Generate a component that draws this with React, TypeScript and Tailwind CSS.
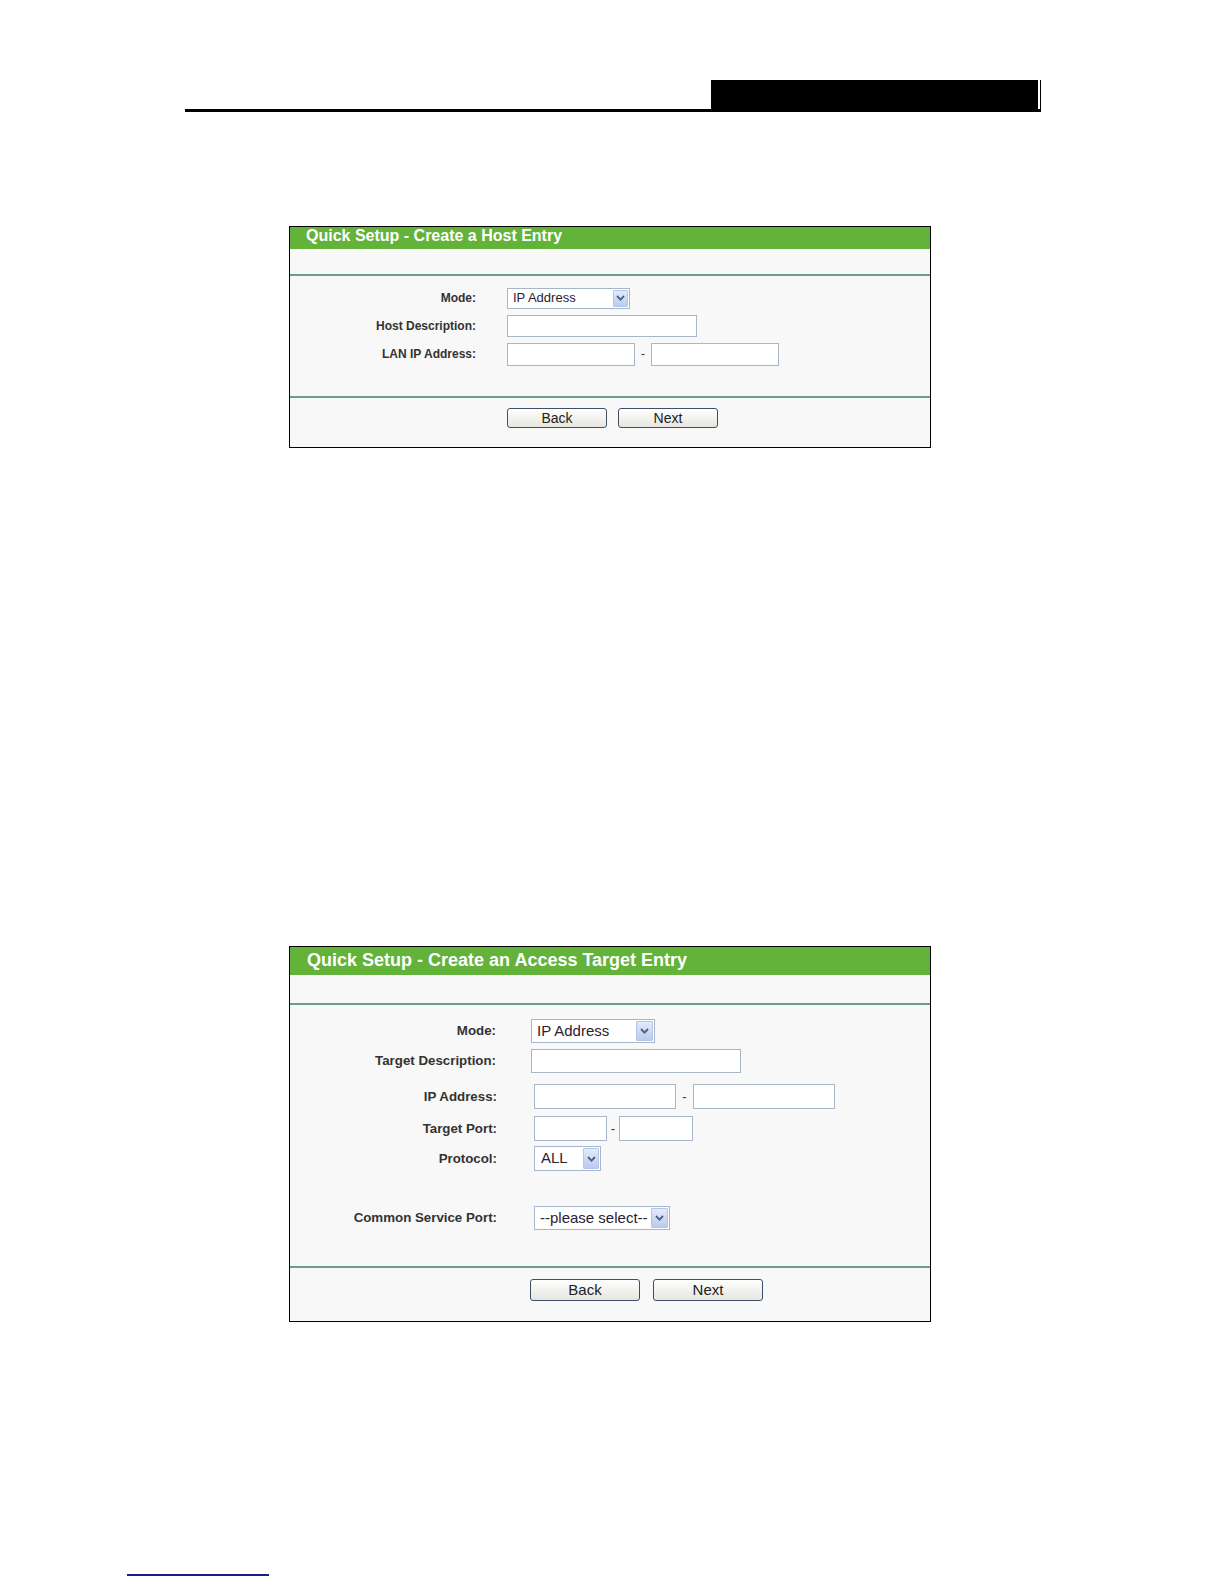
import React from "react";

const Chevron = () => (
  <svg width="9" height="6" viewBox="0 0 9 6">
    <path d="M1 1 L4.5 4.6 L8 1" fill="none" stroke="#4b5f8c" strokeWidth="1.8" />
  </svg>
);

function SelectBox({
  className,
  textClass,
  arrowClass,
  text,
}: {
  className: string;
  textClass: string;
  arrowClass: string;
  text: string;
}) {
  return (
    <div className={`flex items-stretch border border-[#a7b6c9] bg-white ${className}`}>
      <div className={`flex flex-1 items-center text-[#2b2133] ${textClass}`}>{text}</div>
      <div
        className={`m-px flex items-center justify-center rounded-[1px] border border-[#b3c4e6] bg-linear-to-b from-[#e3ebfb] to-[#b9cbef] ${arrowClass}`}
      >
        <Chevron />
      </div>
    </div>
  );
}

function Input({ className }: { className: string }) {
  return <div className={`border border-[#a7b6c9] bg-white ${className}`} />;
}

function Btn({ className, label }: { className: string; label: string }) {
  return (
    <div
      className={`flex items-center justify-center rounded-[3px] border border-[#3e5068] bg-linear-to-b from-[#ffffff] to-[#e6e5df] text-[#222] ${className}`}
    >
      {label}
    </div>
  );
}

export default function App() {
  return (
    <div className="relative min-h-[1584px] w-[1224px] bg-white font-['Liberation_Sans',Arial,sans-serif]">
      {/* page header */}
      <div className="ml-[185px] w-[856px] pt-[80px]">
        <div className="flex h-[29px] justify-end">
          <div className="w-[327px] bg-black" />
          <div className="w-[2px] bg-white" />
          <div className="w-[1px] bg-black" />
        </div>
        <div className="h-[3px] bg-black" />
      </div>

      {/* box 1 */}
      <div className="ml-[289px] mt-[114px] w-[642px] border border-black bg-[#f8f8f8]">
        <div className="h-[22px] bg-[#63b23a] pl-[16px] text-[16px] font-bold leading-[17px] text-white">
          Quick Setup - Create a Host Entry
        </div>
        <div className="h-[25px]" />
        <div className="h-[2px] bg-[#66a088]" />
        <div className="pb-[28px] pt-[8px] text-[12px]">
          <div className="flex h-[28px] items-center">
            <div className="w-[186px] text-right font-bold text-[#333]">Mode:</div>
            <div className="pl-[31px]">
              <SelectBox
                className="h-[21px] w-[123px]"
                textClass="pl-[5px] text-[13px]"
                arrowClass="w-[15px]"
                text="IP Address"
              />
            </div>
          </div>
          <div className="flex h-[28px] items-center">
            <div className="w-[186px] text-right font-bold text-[#333]">Host Description:</div>
            <div className="pl-[31px]">
              <Input className="h-[22px] w-[190px]" />
            </div>
          </div>
          <div className="flex h-[28px] items-center">
            <div className="w-[186px] text-right font-bold text-[#333]">LAN IP Address:</div>
            <div className="flex items-center pl-[31px]">
              <Input className="h-[23px] w-[128px]" />
              <div className="w-[16px] text-center text-[12px] text-[#333]">-</div>
              <Input className="h-[23px] w-[128px]" />
            </div>
          </div>
        </div>
        <div className="h-[2px] bg-[#66a088]" />
        <div className="flex h-[49px] gap-[11px] pl-[217px] pt-[10px]">
          <Btn className="h-[20px] w-[100px] text-[14px]" label="Back" />
          <Btn className="h-[20px] w-[100px] text-[14px]" label="Next" />
        </div>
      </div>

      {/* box 2 */}
      <div className="ml-[289px] mt-[498px] w-[642px] border border-black bg-[#f8f8f8]">
        <div className="h-[28px] bg-[#63b23a] pl-[17px] text-[18px] font-bold leading-[27px] text-white">
          Quick Setup - Create an Access Target Entry
        </div>
        <div className="h-[28px]" />
        <div className="h-[2px] bg-[#66a088]" />
        <div className="pb-[36px] text-[13.3px]">
          <div className="mt-[14px] flex h-[24px] items-center">
            <div className="w-[206px] text-right font-bold text-[#333]">Mode:</div>
            <div className="pl-[35px]">
              <SelectBox
                className="h-[24px] w-[124px]"
                textClass="pl-[5px] text-[15px]"
                arrowClass="w-[17px]"
                text="IP Address"
              />
            </div>
          </div>
          <div className="mt-[6px] flex h-[24px] items-center">
            <div className="w-[206px] text-right font-bold text-[#333]">Target Description:</div>
            <div className="pl-[35px]">
              <Input className="h-[24px] w-[210px]" />
            </div>
          </div>
          <div className="mt-[11px] flex h-[25px] items-center">
            <div className="w-[207px] text-right font-bold text-[#333]">IP Address:</div>
            <div className="flex items-center pl-[37px]">
              <Input className="h-[25px] w-[142px]" />
              <div className="w-[17px] text-center text-[13px] text-[#333]">-</div>
              <Input className="h-[25px] w-[142px]" />
            </div>
          </div>
          <div className="mt-[7px] flex h-[25px] items-center">
            <div className="w-[207px] text-right font-bold text-[#333]">Target Port:</div>
            <div className="flex items-center pl-[37px]">
              <Input className="h-[25px] w-[73px]" />
              <div className="w-[12px] text-center text-[13px] text-[#333]">-</div>
              <Input className="h-[25px] w-[74px]" />
            </div>
          </div>
          <div className="mt-[5px] flex h-[25px] items-center">
            <div className="w-[207px] text-right font-bold text-[#333]">Protocol:</div>
            <div className="pl-[37px]">
              <SelectBox
                className="h-[25px] w-[67px]"
                textClass="pl-[6px] text-[15px]"
                arrowClass="w-[16px]"
                text="ALL"
              />
            </div>
          </div>
          <div className="mt-[35px] flex h-[24px] items-center">
            <div className="w-[207px] text-right font-bold text-[#333]">Common Service Port:</div>
            <div className="pl-[37px]">
              <SelectBox
                className="h-[24px] w-[136px]"
                textClass="pl-[5px] text-[15px]"
                arrowClass="w-[17px]"
                text="--please select--"
              />
            </div>
          </div>
        </div>
        <div className="h-[2px] bg-[#66a088]" />
        <div className="flex h-[53px] gap-[13px] pl-[240px] pt-[11px]">
          <Btn className="h-[22px] w-[110px] text-[15px]" label="Back" />
          <Btn className="h-[22px] w-[110px] text-[15px]" label="Next" />
        </div>
      </div>

      {/* bottom link underline */}
      <div className="ml-[127px] mt-[252px] h-[2px] w-[142px] bg-[#1c1c8a]" />
    </div>
  );
}
